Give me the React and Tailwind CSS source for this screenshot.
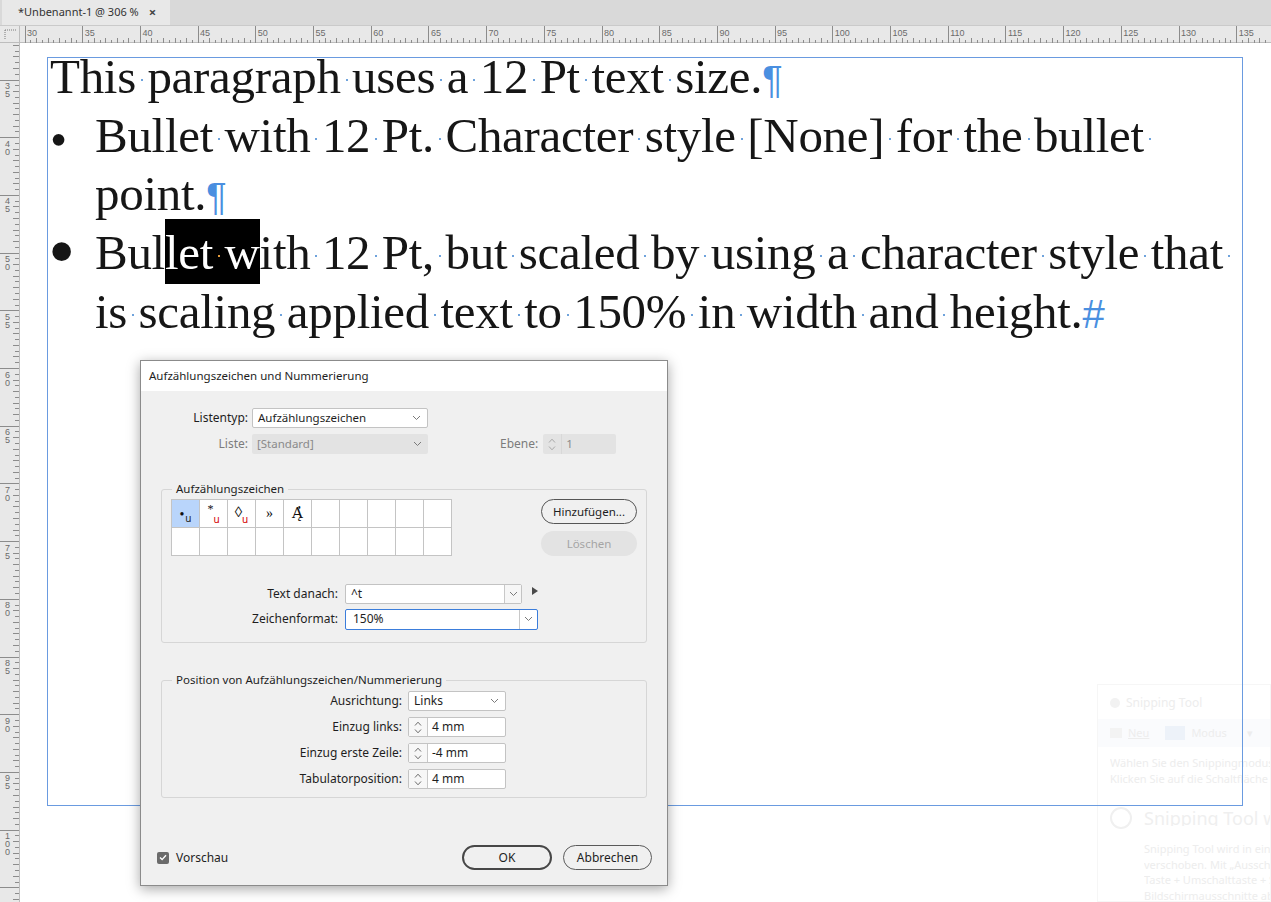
import React from 'react';

// horizontal ruler: 30 mm sits at page x 25, 11.54 px per mm
function HRuler() {
  const items = [];
  for (let i = 56; i <= 276; i++) {
    const mm = i / 2;
    const x = 5 + (mm - 30) * 11.54;
    if (i % 10 === 0) {
      items.push(<line key={'l' + i} x1={x} y1={0} x2={x} y2={17} stroke="#8c8c8c" strokeWidth="1" />);
      items.push(
        <text key={'t' + i} x={x + 2} y={10} fontSize="9" fill="#6b6b6b" fontFamily="Liberation Sans, sans-serif">
          {mm}
        </text>
      );
    } else if (i % 2 === 0) {
      items.push(<line key={'l' + i} x1={x} y1={12} x2={x} y2={17} stroke="#8c8c8c" strokeWidth="1" />);
    } else {
      items.push(<line key={'l' + i} x1={x} y1={14} x2={x} y2={17} stroke="#8c8c8c" strokeWidth="1" />);
    }
  }
  return (
    <svg width="1251" height="17" className="block" shapeRendering="crispEdges">
      {items}
    </svg>
  );
}

// vertical ruler: 35 mm sits at page y 80
function VRuler() {
  const items = [];
  for (let i = 62; i <= 222; i++) {
    const mm = i / 2;
    const y = 37 + (mm - 35) * 11.54;
    if (i % 10 === 0) {
      items.push(<line key={'l' + i} x1={0} y1={y} x2={19} y2={y} stroke="#8c8c8c" strokeWidth="1" />);
      if (mm <= 100) {
        String(mm)
          .split('')
          .forEach((d, k) =>
            items.push(
              <text key={'t' + i + k} x={5} y={y + 9 + k * 8} fontSize="9" fill="#6b6b6b" fontFamily="Liberation Sans, sans-serif">
                {d}
              </text>
            )
          );
      }
    } else if (i % 2 === 0) {
      items.push(<line key={'l' + i} x1={13} y1={y} x2={19} y2={y} stroke="#8c8c8c" strokeWidth="1" />);
    } else {
      items.push(<line key={'l' + i} x1={15} y1={y} x2={19} y2={y} stroke="#8c8c8c" strokeWidth="1" />);
    }
  }
  return (
    <svg width="19" height="859" className="block" shapeRendering="crispEdges">
      {items}
    </svg>
  );
}

// hidden-character space marker
function Sp({ orange }) {
  return (
    <span className="relative inline-block h-[1px] w-[11.5px]">
      <span className={`absolute bottom-[12px] left-[5px] h-[2px] w-[2px] ${orange ? 'bg-[#e39a3b]' : 'bg-[#6fa3dc]'}`} />
    </span>
  );
}

function Words({ text }) {
  const parts = text.split(' ');
  return parts.map((w, i) => (
    <React.Fragment key={i}>
      {w}
      {i < parts.length - 1 && <Sp />}
    </React.Fragment>
  ));
}

function Chevron() {
  return (
    <svg width="9" height="6" viewBox="0 0 9 6">
      <path d="M1 1l3.5 3.5L8 1" fill="none" stroke="#7a7a7a" strokeWidth="1" />
    </svg>
  );
}

function Stepper({ disabled }) {
  return (
    <div className={`flex w-[19px] flex-col items-center justify-center gap-[3px] border-r ${disabled ? 'border-[#d8d8d8]' : 'border-[#c8c8c8] bg-[#f7f7f7]'}`}>
      <svg width="8" height="5" viewBox="0 0 8 5">
        <path d="M1 4.5L4 1.2L7 4.5" fill="none" stroke={disabled ? '#a8a8a8' : '#6a6a6a'} strokeWidth="1" />
      </svg>
      <svg width="8" height="5" viewBox="0 0 8 5">
        <path d="M1 0.5L4 3.8L7 0.5" fill="none" stroke={disabled ? '#a8a8a8' : '#6a6a6a'} strokeWidth="1" />
      </svg>
    </div>
  );
}

function Spin({ value }) {
  return (
    <div className="flex h-[20px] w-[98px] rounded-[2px] border border-[#c3c3c3] bg-white">
      <Stepper />
      <span className="flex items-center pl-[4px] text-[12px]">{value}</span>
    </div>
  );
}

function Cell({ children, active }) {
  return (
    <div className={`relative flex h-[27.5px] w-[28px] items-center justify-center border-b border-r border-[#c4c4c4] font-['Liberation_Serif',serif] text-[15px] text-[#111] ${active ? 'bg-[#b9d5fb]' : 'bg-white'}`}>
      {children}
    </div>
  );
}

function BulletGrid() {
  const cells = [
    <Cell key="0" active>
      <span className="mt-[2px] text-[14px]">•</span>
      <span className="ml-[1px] mt-[10px] font-['Noto_Sans',sans-serif] text-[10px] leading-none text-[#222]">u</span>
    </Cell>,
    <Cell key="1">
      <span className="mb-[8px] text-[12px]">*</span>
      <span className="mt-[12px] font-['Noto_Sans',sans-serif] text-[10px] leading-none text-[#d40000]">u</span>
    </Cell>,
    <Cell key="2">
      <span className="mb-[2px] text-[15px]">◊</span>
      <span className="mt-[12px] font-['Noto_Sans',sans-serif] text-[10px] leading-none text-[#d40000]">u</span>
    </Cell>,
    <Cell key="3">
      <span className="text-[14px]">»</span>
    </Cell>,
    <Cell key="4">
      <span className="font-['DejaVu_Serif',serif] text-[15px]">{'A\u0313\u0328'}</span>
    </Cell>,
  ];
  for (let i = 5; i < 20; i++) cells.push(<Cell key={i} />);
  return <div className="grid w-[281px] grid-cols-[repeat(10,28px)] border-l border-t border-[#c4c4c4]">{cells}</div>;
}

function Dialog() {
  return (
    <div className="absolute left-[140px] top-[360px] flex h-[526px] w-[528px] flex-col border border-[#8b8b8b] bg-[#f0f0f0] font-['Noto_Sans',sans-serif] text-[11.5px] text-[#1e1e1e] shadow-[0_3px_12px_rgba(0,0,0,0.35)]">
      <div className="flex h-[30px] items-center bg-white pl-[8px]">Aufzählungszeichen und Nummerierung</div>

      <div className="flex flex-1 flex-col pt-[17px]">
        <div className="flex h-[20px] items-center">
          <span className="w-[107px] text-right text-[12px]">Listentyp:</span>
          <div className="ml-[4px] flex h-[20px] w-[176px] items-center justify-between rounded-[2px] border border-[#c3c3c3] bg-white pl-[5px] pr-[6px]">
            <span>Aufzählungszeichen</span>
            <Chevron />
          </div>
        </div>
        <div className="mt-[6px] flex h-[20px] items-center">
          <span className="w-[107px] text-right text-[12px] text-[#7c7c7c]">Liste:</span>
          <div className="ml-[4px] flex h-[20px] w-[176px] items-center justify-between rounded-[2px] bg-[#e3e3e3] pl-[5px] pr-[6px] text-[#8a8a8a]">
            <span>[Standard]</span>
            <Chevron />
          </div>
          <span className="ml-[72px] text-[12px] text-[#7c7c7c]">Ebene:</span>
          <div className="ml-[5px] flex h-[20px] w-[73px] rounded-[2px] bg-[#e3e3e3] text-[#8a8a8a]">
            <Stepper disabled />
            <span className="flex items-center pl-[4px]">1</span>
          </div>
        </div>

        <fieldset className="mx-[20px] mt-[27px] h-[162px] rounded-[3px] border border-[#d6d6d6]">
          <legend className="ml-[10px] px-[4px] leading-[16px]">Aufzählungszeichen</legend>
          <div className="flex pl-[9px] pr-[9px] pt-[2px]">
            <BulletGrid />
            <div className="ml-auto flex flex-col gap-[7px]">
              <div className="flex h-[25px] w-[96px] items-center justify-center rounded-full border border-[#555] bg-[#f0f0f0]">Hinzufügen...</div>
              <div className="flex h-[25px] w-[96px] items-center justify-center rounded-full bg-[#e3e3e3] text-[#a5a5a5]">Löschen</div>
            </div>
          </div>
          <div className="mt-[28px] flex h-[20px] items-center">
            <span className="w-[176px] text-right text-[12px]">Text danach:</span>
            <div className="ml-[7px] flex h-[20px] w-[177px] rounded-[2px] border border-[#c3c3c3] bg-white">
              <span className="flex flex-1 items-center pl-[5px] text-[12px]">^t</span>
              <div className="flex w-[17px] items-center justify-center border-l border-[#c8c8c8] bg-[#f6f6f6]">
                <Chevron />
              </div>
            </div>
            <svg width="6" height="8" viewBox="0 0 6 8" className="mb-[6px] ml-[10px]">
              <path d="M0 0L6 4L0 8Z" fill="#4a4a4a" />
            </svg>
          </div>
          <div className="mt-[5px] flex h-[20px] items-center">
            <span className="w-[176px] text-right text-[12px]">Zeichenformat:</span>
            <div className="ml-[7px] flex h-[21px] w-[193px] rounded-[2px] border border-[#3b7ddb] bg-white">
              <span className="flex flex-1 items-center pl-[7px] text-[12px]">150%</span>
              <div className="flex w-[18px] items-center justify-center border-l border-[#c8c8c8]">
                <Chevron />
              </div>
            </div>
          </div>
        </fieldset>

        <fieldset className="mx-[20px] mt-[29px] h-[126px] rounded-[3px] border border-[#d6d6d6]">
          <legend className="ml-[10px] px-[4px] leading-[16px]">Position von Aufzählungszeichen/Nummerierung</legend>
          <div className="mt-[3px] flex h-[20px] items-center">
            <span className="w-[240px] text-right text-[12px]">Ausrichtung:</span>
            <div className="ml-[6px] flex h-[20px] w-[98px] items-center justify-between rounded-[2px] border border-[#c3c3c3] bg-white pl-[5px] pr-[6px] text-[12px]">
              <span>Links</span>
              <Chevron />
            </div>
          </div>
          {[
            ['Einzug links:', '4 mm'],
            ['Einzug erste Zeile:', '-4 mm'],
            ['Tabulatorposition:', '4 mm'],
          ].map(([l, v]) => (
            <div key={l} className="mt-[6px] flex h-[20px] items-center">
              <span className="w-[240px] text-right text-[12px]">{l}</span>
              <div className="ml-[6px]">
                <Spin value={v} />
              </div>
            </div>
          ))}
        </fieldset>

        <div className="mt-auto flex items-center pb-[15px] pl-[16px] pr-[15px]">
          <div className="flex h-[12px] w-[12px] items-center justify-center rounded-[2px] bg-[#6b6b6b]">
            <svg width="8" height="7" viewBox="0 0 8 7">
              <path d="M1 3.6L3.1 5.6L7 1.2" fill="none" stroke="#fff" strokeWidth="1.4" />
            </svg>
          </div>
          <span className="ml-[7px] text-[12px]">Vorschau</span>
          <div className="ml-auto flex h-[25px] w-[90px] items-center justify-center rounded-full border-2 border-[#474747] text-[12px]">OK</div>
          <div className="ml-[11px] flex h-[25px] w-[89px] items-center justify-center rounded-full border border-[#5a5a5a] text-[12px]">Abbrechen</div>
        </div>
      </div>
    </div>
  );
}

// fading Windows notification in the corner, clipped by the window edge
function SnipGhost() {
  return (
    <div className="absolute left-[1077px] top-[641px] h-[218px] w-[174px] overflow-hidden border border-[#f6f6f6] bg-white/50 font-['Noto_Sans',sans-serif] text-[11px] leading-[16px] text-[#ededed]">
      <div className="flex items-center gap-[6px] pl-[12px] pt-[10px]">
        <span className="h-[10px] w-[10px] shrink-0 rounded-full bg-[#f2f2f2]" />
        <span className="text-[12px]">Snipping Tool</span>
      </div>
      <div className="mt-[8px] flex h-[28px] items-center gap-[6px] bg-[#fafbfd] pl-[12px]">
        <span className="h-[10px] w-[12px] shrink-0 bg-[#f3f3f3]" />
        <span className="underline">Neu</span>
        <span className="ml-[10px] h-[14px] w-[20px] shrink-0 bg-[#edf2f9]" />
        <span>Modus</span>
        <span className="ml-[14px]">▾</span>
      </div>
      <div className="mt-[8px] pl-[12px]">
        <div className="overflow-hidden whitespace-nowrap">Wählen Sie den Snippingmodus aus</div>
        <div className="overflow-hidden whitespace-nowrap">Klicken Sie auf die Schaltfläche "Neu"</div>
      </div>
      <div className="mt-[20px] flex items-center gap-[12px] pl-[12px]">
        <span className="h-[22px] w-[22px] shrink-0 rounded-full border-2 border-[#f0f0f0]" />
        <span className="overflow-hidden whitespace-nowrap text-[18px] text-[#efefef]">Snipping Tool wird</span>
      </div>
      <div className="mt-[12px] pl-[46px] leading-[15.5px]">
        <div className="overflow-hidden whitespace-nowrap">Snipping Tool wird in einem</div>
        <div className="overflow-hidden whitespace-nowrap">verschoben. Mit „Ausschneiden</div>
        <div className="overflow-hidden whitespace-nowrap">Taste + Umschalttaste + S</div>
        <div className="overflow-hidden whitespace-nowrap">Bildschirmausschnitte ab</div>
      </div>
    </div>
  );
}

export default function App() {
  return (
    <div className="relative h-[902px] w-[1271px] overflow-hidden bg-white">
      {/* document tab */}
      <div className="flex h-[26px] border-b border-[#cacaca] bg-[#d9d9d9]">
        <div className="ml-[2px] flex w-[168px] items-center bg-[#e8e8e8] pl-[16px] font-['Noto_Sans',sans-serif] text-[11px] text-[#333]">
          <span>*Unbenannt-1 @ 306 %</span>
          <span className="ml-[10px] text-[13px] font-bold text-[#444]">×</span>
        </div>
      </div>

      {/* rulers */}
      <div className="flex h-[17px] border-b border-[#bdbdbd] bg-[#e8e8e8]">
        <div className="w-[20px] border-r border-[#bdbdbd]">
          <svg width="19" height="16" className="block">
            <path d="M5 4H16M5 4V14" fill="none" stroke="#7a7a7a" strokeWidth="1" strokeDasharray="1 1" />
          </svg>
        </div>
        <HRuler />
      </div>

      <div className="flex h-[859px]">
        <div className="w-[20px] border-r border-[#bdbdbd] bg-[#e8e8e8]">
          <VRuler />
        </div>

        {/* page with text frame */}
        <div className="relative flex-1">
          <SnipGhost />
          <div className="absolute left-[27px] top-[14px] h-[749px] w-[1196px] border border-[#6a9be0]" />
          <div className="relative pl-[30px] pt-[5px] font-['Liberation_Serif',serif] text-[49px] tracking-[-0.3px] text-[#161616]">
            <div className="h-[58.7px] whitespace-nowrap leading-[58.7px]">
              <Words text="This paragraph uses a 12 Pt text size." />
              <span className="font-['Liberation_Sans',sans-serif] text-[38px] text-[#4a8fe0]">¶</span>
            </div>
            <div className="h-[58.7px] whitespace-nowrap leading-[58.7px]">
              <span className="inline-block w-[45px] align-[-4px] leading-[0]">•</span>
              <Words text="Bullet with 12 Pt. Character style [None] for the bullet " />
            </div>
            <div className="h-[58.7px] whitespace-nowrap pl-[45px] leading-[58.7px]">
              point.<span className="font-['Liberation_Sans',sans-serif] text-[38px] text-[#4a8fe0]">¶</span>
            </div>
            <div className="h-[58.7px] whitespace-nowrap leading-[58.7px]">
              <span className="-ml-[2px] mr-[2px] inline-block w-[45px] align-[-9px] text-[78px] leading-[0]">•</span>
              Bul
              <span className="bg-black pb-[4px] pt-[6px] text-white">
                let
                <Sp orange />w
              </span>
              <Words text="ith 12 Pt, but scaled by using a character style that " />
            </div>
            <div className="h-[58.7px] whitespace-nowrap pl-[45px] leading-[58.7px]">
              <Words text="is scaling applied text to 150% in width and height." />
              <span className="font-['Liberation_Sans',sans-serif] text-[40px] text-[#4a8fe0]">#</span>
            </div>
          </div>
        </div>
      </div>

      <Dialog />
    </div>
  );
}
